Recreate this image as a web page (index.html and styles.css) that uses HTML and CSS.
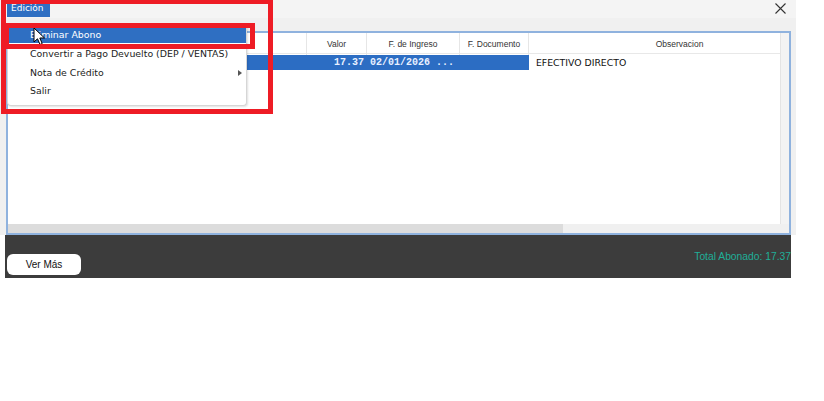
FILE: index.html
```html
<!DOCTYPE html>
<html lang="es">
<head>
    <meta charset="UTF-8">
    <title>Abonos</title>
    <link rel="stylesheet" href="styles.css">
</head>
<body>
    <div class="window">
        <div class="menubar">
            <span class="menu-item active">Edición</span>
            <span class="close">
                <svg width="11" height="11" viewBox="0 0 11 11"><path d="M0.5 0.5 L10.5 10.5 M10.5 0.5 L0.5 10.5" stroke="#333" stroke-width="1.1"/></svg>
            </span>
        </div>

        <div class="grid-box">
            <div class="grid-inner">
                <div class="grid-main">
                    <div class="head">
                        <div class="cell"></div>
                        <div class="cell">Valor</div>
                        <div class="cell">F. de Ingreso</div>
                        <div class="cell">F. Documento</div>
                        <div class="cell obs">Observacion</div>
                    </div>
                    <div class="row selected">
                        <div class="cell"></div>
                        <div class="cell num">17.37</div>
                        <div class="cell date">02/01/2026 ...</div>
                        <div class="cell"></div>
                        <div class="cell text">EFECTIVO DIRECTO</div>
                    </div>
                </div>
                <div class="vscroll"></div>
            </div>
            <div class="hscroll"><div class="thumb"></div></div>
        </div>

        <div class="footer">
            <button type="button" class="btn-more">Ver Más</button>
            <span class="total">Total Abonado: 17.37</span>
        </div>

        <!-- menu desplegable abierto -->
        <div class="dropdown">
            <div class="dd-item hover">Eliminar Abono</div>
            <div class="dd-item">Convertir a Pago Devuelto (DEP / VENTAS)</div>
            <div class="dd-item">Nota de Crédito <span class="arrow"></span></div>
            <div class="dd-item">Salir</div>
        </div>

        <svg class="cursor" width="13" height="19" viewBox="0 0 13 19"><path d="M1 1 L1 15 L4.5 11.8 L7 17.5 L9.2 16.5 L6.8 11 L11.5 11 Z" fill="#fff" stroke="#000" stroke-width="1"/></svg>

        <div class="mark mark-outer"></div>
        <div class="mark mark-inner"></div>
    </div>
</body>
</html>
```

FILE: styles.css
```css
body {
    margin: 0;
    padding: 0;
    background-color: #ffffff;
    font-family: "Liberation Sans", Arial, sans-serif;
}
.window {
    position: relative;
    width: 796px;
    background: linear-gradient(#f0f0f0, #f0f0f0) top / 100% 235px no-repeat;
}
.menubar {
    height: 31px;
    display: flex;
    align-items: flex-start;
    justify-content: space-between;
    padding-left: 7px;
    background: linear-gradient(#f4f4f4, #f4f4f4) top / 100% 18px no-repeat;
}
.menu-item {
    height: 17px;
    line-height: 16px;
    padding: 0 6px 0 4px;
    font-family: "DejaVu Sans", sans-serif;
    font-size: 9px;
    color: #ffffff;
}
.menu-item.active {
    background-color: #2f6fc2;
}
.close {
    margin: 0 10px 0 0;
}
.grid-box {
    margin: 0 5px 0 6px;
    height: 200px;
    border: 2px solid #8fb2de;
    background-color: #ffffff;
    display: flex;
    flex-direction: column;
}
.grid-inner {
    flex: 1;
    display: flex;
}
.grid-main {
    flex: 1;
}
.vscroll {
    width: 8px;
    background-color: #f3f3f3;
    border-left: 1px solid #e4e4e4;
}
.head, .row {
    display: grid;
    grid-template-columns: 299px 60px 93px 69px 1fr;
}
.head {
    height: 20px;
    border-bottom: 1px solid #e8e8e8;
}
.head .cell {
    border-right: 1px solid #e6e6e6;
    font-family: "Liberation Sans", sans-serif;
    font-size: 8.5px;
    color: #333333;
    text-align: center;
    line-height: 22px;
}
.head .cell.obs {
    border-right: none;
    padding-left: 50px;
}
.row {
    height: 15px;
    margin-top: 1px;
}
.row .cell {
    line-height: 15px;
    white-space: nowrap;
}
.row.selected .cell {
    background-color: #2c6dc3;
}
.row.selected .cell.text {
    background-color: #ffffff;
    margin-left: 1px;
}
.cell.num, .cell.date {
    font-family: "Liberation Mono", monospace;
    font-size: 10px;
    font-weight: bold;
    color: #e8f0ff;
}
.cell.num {
    text-align: right;
    padding-right: 3px;
}
.cell.date {
    padding-left: 3px;
}
.cell.text {
    font-family: "DejaVu Sans", sans-serif;
    font-size: 9.3px;
    color: #111111;
    padding-left: 6px;
}
.hscroll {
    height: 9px;
    background-color: #f0f0f0;
}
.hscroll .thumb {
    width: 555px;
    height: 100%;
    background-color: #dcdcdc;
}
.footer {
    margin: 0 5px;
    height: 43px;
    background-color: #3c3c3c;
    display: flex;
    align-items: flex-start;
    justify-content: space-between;
}
.btn-more {
    margin: 19px 0 0 2px;
    width: 74px;
    height: 21px;
    border: none;
    border-radius: 6px;
    background-color: #ffffff;
    font-family: "Liberation Sans", sans-serif;
    font-size: 10px;
    color: #111111;
    padding: 0;
}
.total {
    margin-top: 16px;
    font-family: "Liberation Sans", sans-serif;
    font-size: 10.3px;
    color: #1fae98;
}
.dropdown {
    position: absolute;
    left: 7px;
    top: 25px;
    width: 238px;
    padding: 2px 0 4px;
    background-color: #ffffff;
    border: 1px solid #d6d6d6;
    border-top: none;
    border-radius: 0 0 4px 4px;
    box-shadow: 1px 1px 2px rgba(0, 0, 0, 0.12);
}
.dd-item {
    position: relative;
    height: 18.5px;
    line-height: 18px;
    padding-left: 22px;
    font-family: "DejaVu Sans", sans-serif;
    font-size: 9.4px;
    color: #222222;
}
.dd-item.hover {
    height: 16px;
    line-height: 16px;
    margin-bottom: 2px;
    background-color: #2f6fc2;
    color: #ffffff;
}
.arrow {
    position: absolute;
    right: 4px;
    top: 6px;
    border-left: 4px solid #555555;
    border-top: 3.5px solid transparent;
    border-bottom: 3.5px solid transparent;
}
.cursor {
    position: absolute;
    left: 33px;
    top: 27px;
}
.mark {
    position: absolute;
    border: 5px solid #ee1c25;
    box-sizing: border-box;
}
.mark-outer {
    left: 1px;
    top: -1px;
    width: 272px;
    height: 115px;
}
.mark-inner {
    left: 4px;
    top: 23px;
    width: 251px;
    height: 26px;
}
```
